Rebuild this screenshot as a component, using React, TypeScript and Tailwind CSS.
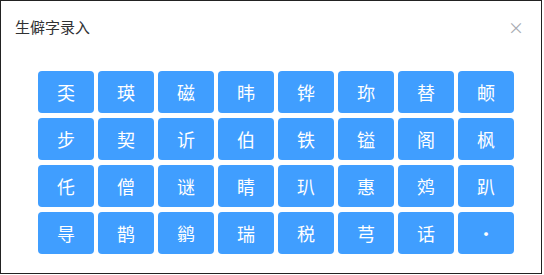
const rows: string[][] = [
  ["奀", "瑛", "磁", "𬀩", "铧", "珎", "替", "𬱖"],
  ["步", "契", "䜣", "伯", "铁", "镒", "阁", "枫"],
  ["仛", "僧", "谜", "睛", "玐", "惠", "䴔", "趴"],
  ["㝵", "鹊", "鹟", "瑞", "税", "芎", "话", "·"],
];

export default function App() {
  return (
    <div className="w-[544px] h-[275px] bg-white" style={{ fontFamily: '"Noto Sans CJK SC", "Noto Sans", sans-serif' }}>
      <div className="w-[542px] h-[274px] border border-[#222] bg-white">
        {/* Header */}
        <div className="flex items-center justify-between pl-[14px] pr-[17px] pt-[12px] h-[40px]">
          <span className="text-[15px] text-[#303133] leading-[22px]">生僻字录入</span>
          <button className="text-[#a8abb2] text-[16px] leading-none">×</button>
        </div>

        {/* Characters */}
        <div className="grid grid-cols-8 gap-x-[4px] gap-y-[5px] w-[476px] ml-[37px] mt-[30px]">
          {rows.flat().map((ch, i) => (
            <button
              key={i}
              className="h-[42px] rounded-[4px] bg-[#409eff] text-white text-[18px] leading-none flex items-center justify-center"
            >
              {ch}
            </button>
          ))}
        </div>
      </div>
    </div>
  );
}
